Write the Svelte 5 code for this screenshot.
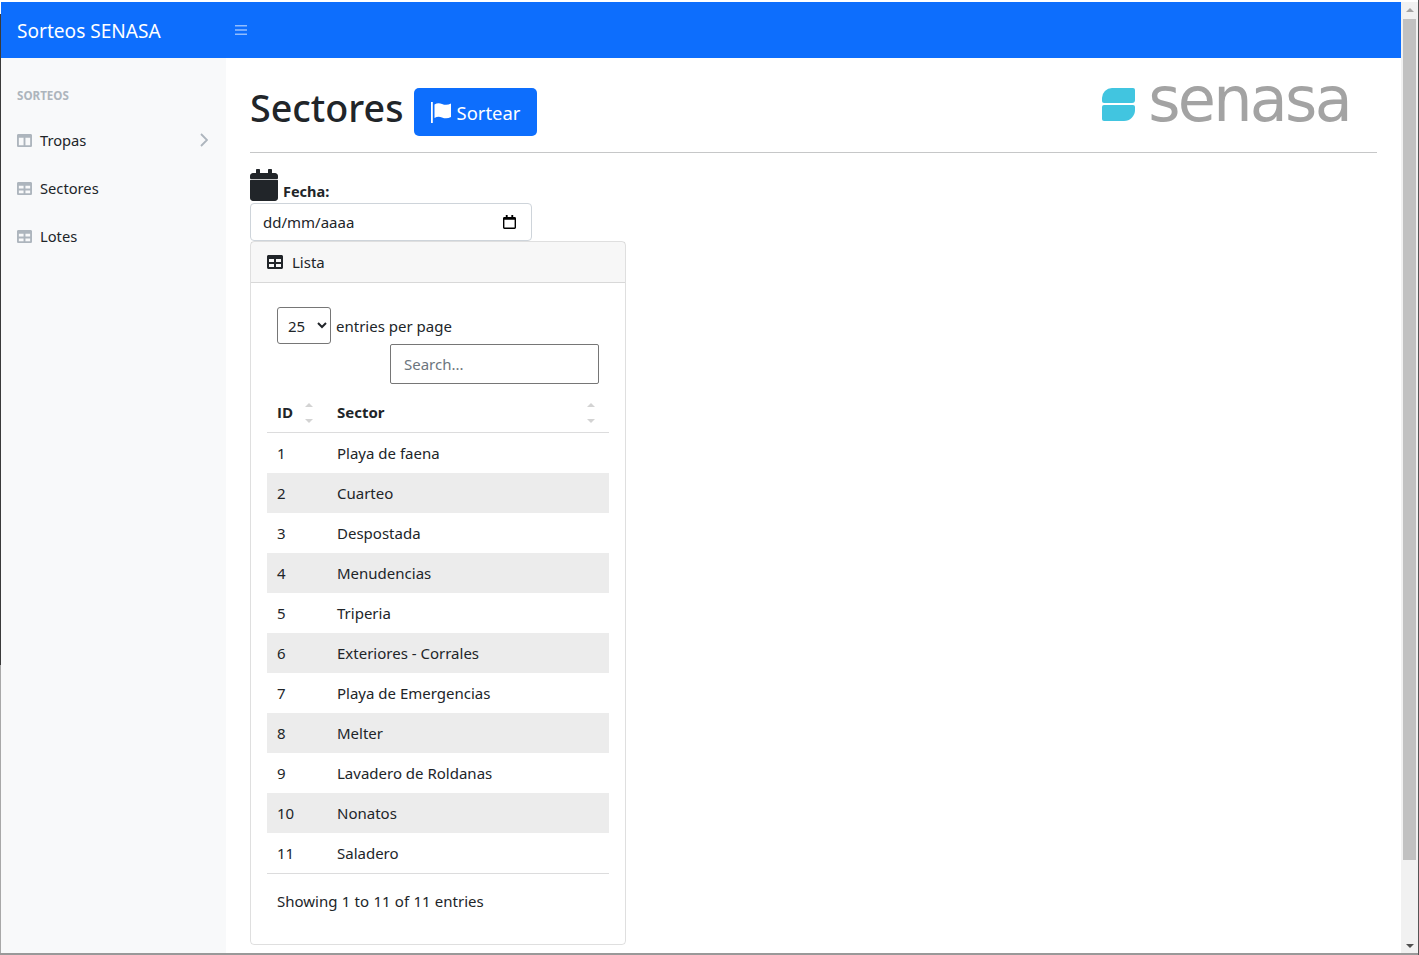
<script>
  const rows = [
    [1, 'Playa de faena'], [2, 'Cuarteo'], [3, 'Despostada'], [4, 'Menudencias'],
    [5, 'Triperia'], [6, 'Exteriores - Corrales'], [7, 'Playa de Emergencias'],
    [8, 'Melter'], [9, 'Lavadero de Roldanas'], [10, 'Nonatos'], [11, 'Saladero']
  ];
  const table = 'M464 32H48C21.49 32 0 53.49 0 80v352c0 26.51 21.49 48 48 48h416c26.51 0 48-21.49 48-48V80c0-26.51-21.49-48-48-48zM224 416H64v-96h160v96zm0-160H64v-96h160v96zm224 160H288v-96h160v96zm0-160H288v-96h160v96z';
  const columns = 'M464 32H48C21.49 32 0 53.49 0 80v352c0 26.51 21.49 48 48 48h416c26.51 0 48-21.49 48-48V80c0-26.51-21.49-48-48-48zM224 416H64V160h160v256zm224 0H288V160h160v256z';
  const calendar = 'M12 172h424c6.6 0 12 5.4 12 12v280c0 26.5-21.5 48-48 48H48c-26.5 0-48-21.500-48-48V184c0-6.6 5.4-12 12-12zm436-24v-36c0-26.5-21.5-48-48-48h-48V12c0-6.6-5.4-12-12-12h-40c-6.6 0-12 5.4-12 12v52H160V12c0-6.6-5.4-12-12-12h-40c-6.6 0-12 5.4-12 12v52H48C21.5 64 0 85.5 0 112v36c0 6.6 5.4 12 12 12h424c6.6 0 12-5.4 12-12z';
  const nav = [
    { label: 'Tropas', icon: columns, more: true },
    { label: 'Sectores', icon: table },
    { label: 'Lotes', icon: table }
  ];
</script>

<div class="window">
  <div class="page">
    <header class="topbar">
      <span class="brand">Sorteos SENASA</span>
      <svg class="bars" viewBox="0 0 12 10" aria-hidden="true"><path d="M0 0h12v1.6H0zM0 4.2h12v1.6H0zM0 8.4h12V10H0z" /></svg>
    </header>
    <div class="below">
      <aside class="sidebar">
        <div class="heading">SORTEOS</div>
        {#each nav as item}
          <div class="navitem">
            <svg class="navicon" viewBox="0 0 512 512" aria-hidden="true"><path d={item.icon} /></svg>
            <span>{item.label}</span>
            {#if item.more}
              <svg class="chev" viewBox="0 0 8 14" aria-hidden="true"><path d="M1 1l6 6-6 6" /></svg>
            {/if}
          </div>
        {/each}
      </aside>
      <main class="main">
        <div class="titlerow">
          <h1>Sectores</h1>
          <button class="primary">
            <svg class="flag" viewBox="0 0 21 21" aria-hidden="true"><path d="M1 0h1.800v21H1zM4.500 2.500C7 1 9.500 1 12 2c3 1.200 6 1.200 9-.5v13.500c-3 1.700-6 1.700-9 .5C9.500 14.500 7 14.500 4.500 16z" /></svg>
            <span>Sortear</span>
          </button>
          <div class="logo">
            <svg class="mark" viewBox="0 0 33 34" aria-hidden="true">
              <path d="M10 1h21a2 2 0 0 1 2 2v10a3 3 0 0 1-3 3H2a2 2 0 0 1-2-2v-3A10 10 0 0 1 10 1z" />
              <path d="M2 18h29a2 2 0 0 1 2 2v3a11 11 0 0 1-11 11H2a2 2 0 0 1-2-2V20a2 2 0 0 1 2-2z" />
            </svg>
            <span class="word">senasa</span>
          </div>
        </div>
        <hr />
        <div class="fecha">
          <svg class="cal" viewBox="0 0 448 512" aria-hidden="true"><path d={calendar} /></svg>
          <strong>Fecha:</strong>
        </div>
        <div class="date">
          <span>dd/mm/aaaa</span>
          <svg class="datecal" viewBox="0 0 14 15" aria-hidden="true">
            <path d="M3 0h2v2h4V0h2v2h1.500A1.500 1.500 0 0 1 14 3.500v10a1.500 1.500 0 0 1-1.500 1.500h-11A1.500 1.500 0 0 1 0 13.500v-10A1.500 1.500 0 0 1 1.500 2H3zM1.500 5v8.500h11V5z" />
          </svg>
        </div>
        <section class="card">
          <div class="cardhead">
            <svg class="headicon" viewBox="0 0 512 512" aria-hidden="true"><path d={table} /></svg>
            <span>Lista</span>
          </div>
          <div class="cardbody">
            <div class="dt-top">
              <div class="perpage">
                <select><option>25</option></select>
                <span>entries per page</span>
              </div>
              <div class="searchrow"><input placeholder="Search..." /></div>
            </div>
            <table>
              <thead>
                <tr>
                  <th class="idcol">ID<span class="sort"></span></th>
                  <th>Sector<span class="sort"></span></th>
                </tr>
              </thead>
              <tbody>
                {#each rows as [id, name], i}
                  <tr class:odd={i % 2 === 1}>
                    <td>{id}</td>
                    <td>{name}</td>
                  </tr>
                {/each}
              </tbody>
            </table>
            <div class="info">Showing 1 to 11 of 11 entries</div>
          </div>
        </section>
      </main>
    </div>
  </div>
  <div class="scrollbar">
    <span class="arrow up"></span>
    <div class="track"><div class="thumb"></div></div>
    <span class="arrow down"></span>
  </div>
</div>

<style>
  :global(html), :global(body) { margin: 0; height: 100%; overflow: hidden; background: #fff; }
  * { box-sizing: border-box; }
  .window {
    width: 1419px; height: 955px; display: flex; overflow: hidden;
    padding: 2px 1px 2px 1px;
    font-family: "Noto Sans", "Open Sans", sans-serif; font-size: 15px; line-height: 24px; color: #212529;
    background:
      linear-gradient(#3a3a3a, #3a3a3a) 0 14px / 1px 651px no-repeat,
      linear-gradient(#a8a8a8, #a8a8a8) 0 665px / 1px 288px no-repeat,
      #fff;
    box-shadow: inset -1px 0 0 #555, inset 0 -2px 0 #999;
  }
  .page { flex: 1; min-width: 0; display: flex; flex-direction: column; }
  .topbar { height: 56px; flex: none; background: #0d6efd; display: flex; align-items: center; padding-top: 2px; }
  .brand { width: 234px; padding-left: 16px; font-size: 19.100px; color: #fff; }
  .bars { width: 12px; height: 10px; margin-bottom: 2px; fill: rgba(255,255,255,.55); }
  .below { flex: 1; display: flex; min-height: 0; }
  .sidebar { width: 225px; flex: none; background: #f8f9fa; padding: 25px 0 0 16px; font-size: 14.700px; }
  .heading { font-size: 11.600px; font-weight: 700; color: #adb5bd; line-height: 26px; margin-bottom: 7px; }
  .navitem { height: 48px; display: flex; align-items: center; gap: 8px; position: relative; }
  .navicon { width: 15px; height: 15px; fill: #adb5bd; }
  .chev { position: absolute; left: 183px; top: 17px; width: 8px; height: 14px; fill: none; stroke: #adb5bd; stroke-width: 1.8; }
  .main { flex: 1; min-width: 0; padding: 30px 24px 0; }
  .titlerow { display: flex; align-items: flex-start; height: 64px; }
  h1 { margin: -4px 11px 0 0; font-size: 37.700px; line-height: 48px; font-weight: 500; }
  .primary {
    height: 48px; width: 123px; border: 0; border-radius: 5px; background: #0d6efd; color: #fff;
    font: inherit; font-size: 18.400px; display: flex; align-items: center; justify-content: center; gap: 6px; padding: 2px 2px 0 0;
  }
  .flag { width: 21px; height: 21px; fill: #fff; margin-top: -1px; }
  .logo { margin-left: auto; margin-right: 27px; display: flex; align-items: center; gap: 13px; height: 34px; margin-top: -1px; }
  .mark { width: 33px; height: 34px; fill: #41c5e0; }
  .word { font-family: "DejaVu Sans", sans-serif; font-size: 62px; line-height: 34px; color: #a3a3a3; letter-spacing: -2.700px; margin-top: -8px; }
  hr { margin: 0; border: 0; border-top: 1px solid #c6c7c8; }
  .fecha { display: flex; align-items: flex-end; gap: 5px; margin-top: 16px; height: 34px; }
  .cal { width: 28px; height: 32px; fill: #212529; margin-bottom: 2px; }
  .fecha strong { font-size: 14.500px; line-height: 24px; }
  .date {
    width: 282px; height: 38px; border: 1px solid #ced4da; border-radius: 4px;
    display: flex; align-items: center; justify-content: space-between; padding: 0 15px 0 12px; background: #fff;
  }
  .datecal { width: 13px; height: 14px; fill: #000; }
  .card { width: 376px; height: 704px; border: 1px solid rgba(0,0,0,.125); border-radius: 4px; }
  .cardhead {
    height: 41px; padding-left: 16px; display: flex; align-items: center; gap: 9px;
    background: rgba(0,0,0,.03); border-bottom: 1px solid rgba(0,0,0,.125);
  }
  .headicon { width: 16px; height: 16px; fill: #212529; }
  .cardbody { padding: 24px 16px 0; }
  .dt-top { padding: 0 10px; height: 85px; }
  .perpage { display: flex; align-items: center; gap: 5px; height: 37px; }
  select {
    width: 54px; height: 37px; font: inherit; color: #212529; padding: 0 0 0 6px;
    background: #fff; border: 1px solid #767676; border-radius: 3px;
  }
  .searchrow { display: flex; justify-content: flex-end; }
  input {
    width: 209px; height: 40px; font: inherit; padding: 0 13px; color: #212529;
    border: 1px solid #767676; border-radius: 2px; outline: 0;
  }
  input::placeholder { color: #6c757d; }
  table { width: 342px; border-collapse: collapse; table-layout: fixed; }
  th { text-align: left; height: 40px; padding: 0 10px; font-weight: 700; border-bottom: 1px solid #dcdcdd; position: relative; }
  .idcol { width: 60px; font-family: "Open Sans", sans-serif; }
  td { height: 40px; padding: 0 10px; }
  tr.odd td { background: #ececec; }
  tbody tr:first-child td { height: 41px; }
  tbody tr:last-child td { border-bottom: 1px solid #dcdcdd; }
  .sort { position: absolute; right: 14px; top: 11px; width: 8px; height: 20px; }
  .sort::before, .sort::after { content: ''; position: absolute; left: 0; border-left: 4px solid transparent; border-right: 4px solid transparent; }
  .sort::before { top: 0; border-bottom: 4px solid #d3d3d3; }
  .sort::after { bottom: 0; border-top: 4px solid #d3d3d3; }
  .info { padding: 15px 10px 0; word-spacing: .4px; }
  .scrollbar { width: 17px; flex: none; background: #f1f1f1; display: flex; flex-direction: column; align-items: center; }
  .track { flex: 1; width: 100%; padding: 2px 2px 0; }
  .thumb { height: 841px; background: #c1c1c1; }
  .arrow { width: 0; height: 0; border-left: 4px solid transparent; border-right: 4px solid transparent; margin: 6px 0 5px; flex: none; }
  .up { border-bottom: 4px solid #a3a3a3; }
  .down { border-top: 4px solid #505050; }
</style>
